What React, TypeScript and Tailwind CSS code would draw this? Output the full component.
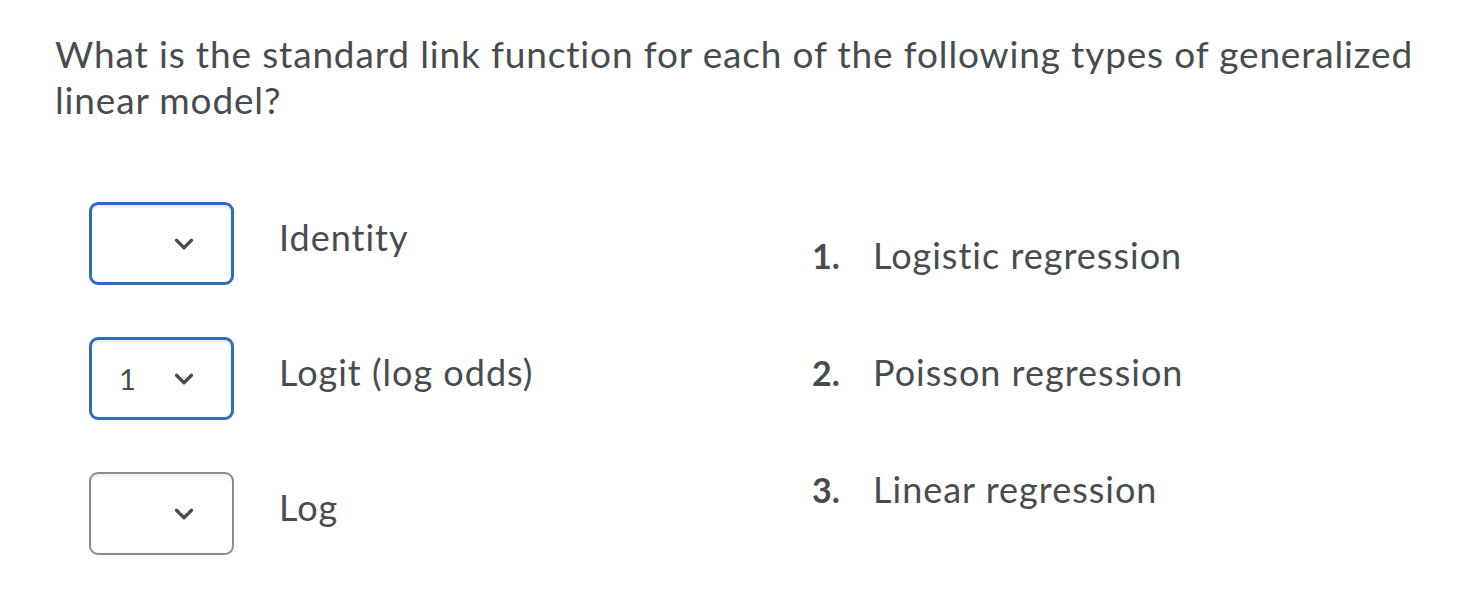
import { ChevronDown } from "lucide-react";

type Choice = { value: string; label: string; focused: boolean };

const choices: Choice[] = [
  { value: "", label: "Identity", focused: true },
  { value: "1", label: "Logit (log odds)", focused: true },
  { value: "", label: "Log", focused: false },
];

const answers = ["Logistic regression", "Poisson regression", "Linear regression"];

const SelectBox = ({ value, focused }: { value: string; focused: boolean }) => (
  <div
    className={
      focused
        ? "w-[145px] h-[83px] shrink-0 rounded-[9px] border-[3px] border-[#2f6dba] bg-white shadow-[inset_0_3px_0_#f0f1f2] flex items-center pl-[27px] pr-[36px] justify-between"
        : "w-[145px] h-[83px] shrink-0 rounded-[9px] border-2 border-[#8a8d90] bg-white shadow-[inset_0_3px_0_#f0f1f2] flex items-center pl-[28px] pr-[37px] justify-between"
    }
  >
    <span className="text-[29px] tracking-[0.5px] text-[#494c4e] leading-none">{value}</span>
    <ChevronDown size={30} strokeWidth={2.6} color="#494c4e" className="-mr-[4px]" />
  </div>
);

export default function App() {
  return (
    <div className="min-h-screen bg-white font-['Lato','Liberation_Sans',sans-serif] text-[#494c4e] [font-variant-ligatures:none]">
      <div className="pl-[55px] pt-[31px]">
        <p className="text-[37px] tracking-[0.85px] leading-[46px] w-[1395px]">
          What is the standard link function for each of the following types of generalized linear model?
        </p>

        <div className="flex mt-[79px]">
          <div className="w-[757px] pl-[34px] flex flex-col gap-[52px]">
            {choices.map((c, i) => (
              <div key={i} className="flex items-center gap-[45px]">
                <SelectBox value={c.value} focused={c.focused} />
                <span className="text-[36px] tracking-[1px] -mt-[14px]">{c.label}</span>
              </div>
            ))}
          </div>

          <ol className="flex flex-col gap-[70px] pt-[30px]">
            {answers.map((a, i) => (
              <li key={a} className="flex items-baseline leading-[46px]">
                <span className="w-[63px] font-bold text-[34px] -ml-[2px] pl-[2px]">{i + 1}.</span>
                <span className="text-[36px] tracking-[1px]">{a}</span>
              </li>
            ))}
          </ol>
        </div>
      </div>
    </div>
  );
}
